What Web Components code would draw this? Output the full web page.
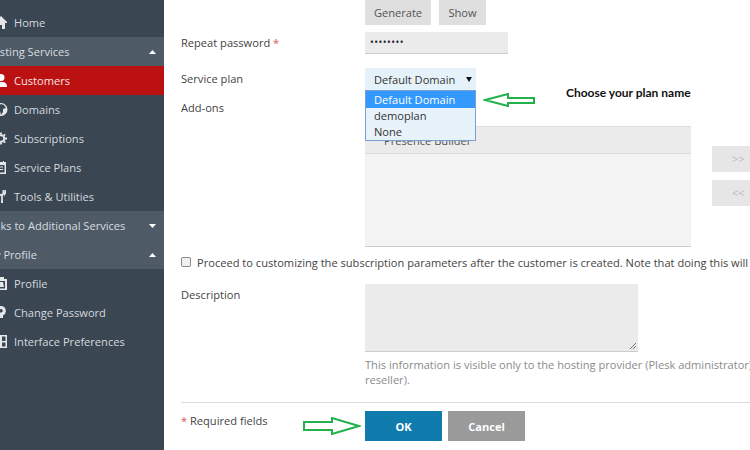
<!DOCTYPE html>
<html>
<head>
<meta charset="utf-8">
<title>Add customer</title>
<style>
  html, body { margin: 0; height: 100%; overflow: hidden; background: #fff; }
  body { font-family: "Open Sans", sans-serif; font-size: 11.1px; }
  app-shell { height: 450px; }
</style>
</head>
<body>
<app-shell>
  <side-nav slot="nav"></side-nav>
  <customer-form slot="main"></customer-form>
</app-shell>

<script>
const ICONS = {
  home: '<path d="M6 0 0 6v1h2v6h8V7h2V6zM5 9h2v4H5z" fill-rule="evenodd"/>',
  user: '<circle cx="6" cy="3.5" r="3.500"/><path d="M0 13c0-4 2-5 6-5s6 1 6 5z"/>',
  globe: '<path fill-rule="evenodd" d="M6 0a6.500 6.500 0 1 0 0 13A6.500 6.500 0 0 0 6 0zM3 3l3-2 3 1 2 3-3 1v3L6 12 5 8 2 6z"/>',
  gear: '<circle cx="6" cy="6.500" r="3.300" fill="none" stroke="#e4e7ea" stroke-width="2"/><path d="M6 .5v2M6 10.500v2M0 6.500h2M10 6.500h2M1.800 2.300l1.400 1.400M8.800 9.300l1.400 1.400M1.800 10.700l1.400-1.400M8.800 3.700l1.400-1.400" stroke="#e4e7ea" stroke-width="1.800" fill="none"/>',
  plans: '<path fill-rule="evenodd" d="M3 0h1v1h4V0h1v1h2v12H1V1h2zM2.500 4v7.500h7V4zM4 5.500h4v1H4zM4 8h4v1H4z"/>',
  tools: '<path d="M2 0h1.500v3l1 1h1l1-1V0H8v3.500L6.800 6.500 7 13H5l.200-6.500L2 3.500zM8.500 0H10v3.500L8 6.500V3z" transform="translate(1 0)"/>',
  profile: '<path fill-rule="evenodd" d="M0 2h3V0h6v2h3v11H0zM2 4v7.500h8V4zM4 5h4l1 5H3z"/>',
  key: '<path fill-rule="evenodd" d="M6 0a5 5 0 0 1 2 9.500V12H4V9.500A5 5 0 0 1 6 0zm0 3a1.800 1.800 0 1 0 0 3.600A1.800 1.800 0 0 0 6 3z"/>',
  prefs: '<path fill-rule="evenodd" d="M0 0h12v13H0zM1.500 1.500v4.500H5V1.500zM7 1.500v4.500h3.500V1.500zM1.500 7.500v4H5v-4zM7 7.500v4h3.500v-4z"/>'
};

class AppShell extends HTMLElement {
  constructor() {
    super();
    this.attachShadow({ mode: "open" });
    this.shadowRoot.innerHTML = `
      <style>
        :host { display: flex; width: 750px; overflow: hidden; }
        .nav { flex: 0 0 164px; display: flex; }
        .main { flex: 1; min-width: 0; }
      </style>
      <div class="nav"><slot name="nav"></slot></div>
      <div class="main"><slot name="main"></slot></div>
    `;
  }
}

class NavItem extends HTMLElement {
  constructor() {
    super();
    this.attachShadow({ mode: "open" });
    const icon = ICONS[this.getAttribute("icon")] || "";
    this.shadowRoot.innerHTML = `
      <style>
        :host {
          display: flex; align-items: center; gap: 7px; height: 29px;
          color: #d5dadf; white-space: nowrap; overflow: hidden;
        }
        :host([active]) { background: #bb1111; color: #f6e4e4; }
        svg { flex: none; width: 12px; height: 13px; margin-left: -5px; fill: #e4e7ea; overflow: visible; }
        :host([active]) svg { fill: #fff; }
      </style>
      <svg viewBox="0 0 12 13">${icon}</svg>
      <span><slot></slot></span>
    `;
  }
}

class NavGroup extends HTMLElement {
  constructor() {
    super();
    this.attachShadow({ mode: "open" });
    const up = this.hasAttribute("open");
    this.shadowRoot.innerHTML = `
      <style>
        :host {
          display: flex; align-items: center; height: 29px;
          background: #4e5b66; color: #d9dde1; white-space: nowrap;
        }
        .label { flex: 1; min-width: 0; overflow: hidden; }
        .label span { display: block; margin-left: -15px; }
        svg { flex: none; width: 7px; height: 4px; margin-right: 8px; fill: #fff; }
      </style>
      <div class="label"><span><slot></slot></span></div>
      <svg viewBox="0 0 7 4"><path d="${up ? "M3.500 0 7 4H0z" : "M0 0h7L3.500 4z"}"/></svg>
    `;
  }
}

class SideNav extends HTMLElement {
  constructor() {
    super();
    this.attachShadow({ mode: "open" });
    this.shadowRoot.innerHTML = `
      <style>
        :host { display: block; width: 164px; height: 450px; background: #3a4652; padding-top: 8px; box-sizing: border-box; overflow: hidden; }
      </style>
      <nav-item icon="home">Home</nav-item>
      <nav-group open>Hosting Services</nav-group>
      <nav-item icon="user" active>Customers</nav-item>
      <nav-item icon="globe">Domains</nav-item>
      <nav-item icon="gear">Subscriptions</nav-item>
      <nav-item icon="plans">Service Plans</nav-item>
      <nav-item icon="tools">Tools &amp; Utilities</nav-item>
      <nav-group>Links to Additional Services</nav-group>
      <nav-group open>My Profile</nav-group>
      <nav-item icon="profile">Profile</nav-item>
      <nav-item icon="key">Change Password</nav-item>
      <nav-item icon="prefs">Interface Preferences</nav-item>
    `;
  }
}

class FormRow extends HTMLElement {
  constructor() {
    super();
    this.attachShadow({ mode: "open" });
    this.shadowRoot.innerHTML = `
      <style>
        :host { display: grid; grid-template-columns: 184px 1fr; color: #444; }
        .label { line-height: 16px; padding-top: var(--label-top, 3px); }
      </style>
      <div class="label"><slot name="label"></slot></div>
      <div class="field"><slot></slot></div>
    `;
  }
}

class PlanSelect extends HTMLElement {
  constructor() {
    super();
    this.attachShadow({ mode: "open" });
    this.shadowRoot.innerHTML = `
      <style>
        :host { display: block; position: relative; width: 111px; height: 22px; }
        .box {
          height: 22px; background: #e6f2f9; color: #333; display: flex;
          align-items: center; padding: 0 4px 0 9px; justify-content: space-between;
        }
        .arrow { width: 0; height: 0; border: 3px solid transparent; border-top: 5px solid #111; border-bottom: 0; }
        .menu {
          position: absolute; left: 0; top: 22px; width: 111px; box-sizing: border-box; height: 51px;
          background: #e8f2fa; border: 1px solid #7a9fd0; color: #333; z-index: 3;
        }
        .menu div { height: 16px; line-height: 16px; padding-left: 8px; }
        .menu .sel { background: #3399ff; color: #fff; height: 17px; line-height: 17px; }
      </style>
      <div class="box"><span>Default Domain</span><i class="arrow"></i></div>
      <div class="menu">
        <div class="sel">Default Domain</div>
        <div>demoplan</div>
        <div>None</div>
      </div>
    `;
  }
}

class AddonPicker extends HTMLElement {
  constructor() {
    super();
    this.attachShadow({ mode: "open" });
    this.shadowRoot.innerHTML = `
      <style>
        :host { display: flex; gap: 21px; align-items: flex-start; white-space: nowrap; width: 500px; }
        .list { flex: 0 0 326px; height: 121px; background: #f3f3f3; border-bottom: 1px solid #ccc; box-sizing: border-box; }
        .head { height: 28px; box-sizing: border-box; background: #ebebeb; border-top: 1px solid #ddd; border-bottom: 1px solid #d5dde2; padding: 6px 0 0 19px; color: #555; line-height: 16px; }
        .moves { display: flex; flex-direction: column; gap: 8px; padding-top: 20px; }
        .moves div { width: 60px; height: 26px; line-height: 26px; background: #e6e6e6; color: #bbb; padding-left: 20px; box-sizing: border-box; }
      </style>
      <div class="list"><div class="head">Presence Builder</div></div>
      <div class="moves"><div>&gt;&gt;</div><div>&lt;&lt;</div></div>
    `;
  }
}

class PlainButton extends HTMLElement {
  constructor() {
    super();
    this.attachShadow({ mode: "open" });
    this.shadowRoot.innerHTML = `
      <style>
        :host {
          display: inline-flex; align-items: center; justify-content: center; box-sizing: border-box;
          height: 26px; background: #dfdfdf; color: #555;
        }
        :host([kind="ok"]) { width: 77px; height: 30px; background: #0f7cad; color: #fff; font-weight: 700; }
        :host([kind="cancel"]) { width: 77px; height: 30px; background: #9a9a9a; color: #fff; font-weight: 700; }
      </style>
      <slot></slot>
    `;
  }
}

class GreenArrow extends HTMLElement {
  constructor() {
    super();
    this.attachShadow({ mode: "open" });
    const left = this.hasAttribute("left");
    this.shadowRoot.innerHTML = `
      <style>
        :host { display: block; position: absolute; z-index: 4; }
        svg { display: block; }
      </style>
      ${left
        ? `<svg width="52" height="14" viewBox="0 0 52 14"><path d="M2 7 25 1v4h26v5H25v3z" fill="#fff" stroke="#22b14c" stroke-width="2"/></svg>`
        : `<svg width="58" height="18" viewBox="0 0 58 18"><path d="M1 5h28V1l27 8-27 8v-4H1z" fill="#fff" stroke="#22b14c" stroke-width="2"/></svg>`}
    `;
  }
}

class CustomerForm extends HTMLElement {
  constructor() {
    super();
    this.attachShadow({ mode: "open" });
    this.shadowRoot.innerHTML = `
      <style>
        :host { display: block; position: relative; height: 450px; width: 586px; overflow: hidden; box-sizing: border-box; padding-left: 17px; color: #444; }
        .buttons { display: flex; gap: 8px; height: 25px; align-items: flex-end; }
        .buttons plain-button:first-child { width: 66px; }
        .buttons plain-button:last-child { width: 47px; }
        .input { width: 143px; height: 22px; box-sizing: border-box; background: #ebebeb; border-bottom: 1px solid #ccc; color: #222; padding-left: 5px; line-height: 20px; letter-spacing: .5px; font-size: 10px; }
        .star { color: #d9534f; }
        .check { display: flex; align-items: center; gap: 6px; margin-top: 7px; height: 16px; white-space: nowrap; color: #444; }
        .check i { flex: none; width: 8px; height: 8px; border: 1px solid #8a8a8a; border-radius: 2px; background: #f0f0f0; }
        .area { position: relative; width: 273px; height: 68px; background: #ebebeb; border-bottom: 1px solid #ccc; box-sizing: border-box; }
        .area svg { position: absolute; right: 1px; bottom: 1px; }
        .hint { width: 400px; margin-top: 5px; line-height: 15px; color: #8b8b8b; white-space: nowrap; }
        .rule { height: 1px; background: #ddd; margin-top: 15px; }
        .foot { display: grid; grid-template-columns: 184px 1fr; margin-top: 8px; }
        .foot .req { padding-top: 2px; line-height: 16px; }
        .foot .acts { display: flex; gap: 6px; }
        .note { position: absolute; left: 402px; top: 85px; font: 700 12px Lato, sans-serif; color: #111; white-space: nowrap; }
        form-row + form-row { margin-top: 14px; }
      </style>
      <div class="buttons" style="margin-left:184px">
        <plain-button>Generate</plain-button>
        <plain-button>Show</plain-button>
      </div>
      <form-row style="margin-top:7px">
        <span slot="label">Repeat password <span class="star">*</span></span>
        <div class="input">&#8226;&#8226;&#8226;&#8226;&#8226;&#8226;&#8226;&#8226;</div>
      </form-row>
      <form-row>
        <span slot="label">Service plan</span>
        <plan-select></plan-select>
      </form-row>
      <form-row style="margin-top:10px;--label-top:0px">
        <span slot="label">Add-ons</span>
        <addon-picker style="margin-top:26px"></addon-picker>
      </form-row>
      <div class="check"><i></i><span>Proceed to customizing the subscription parameters after the customer is created. Note that doing this will</span></div>
      <form-row style="margin-top:14px">
        <span slot="label">Description</span>
        <div>
          <div class="area"><svg width="8" height="8" viewBox="0 0 8 8"><path d="M1 7 7 1M4 7l3-3" stroke="#777" fill="none"/></svg></div>
          <div class="hint">This information is visible only to the hosting provider (Plesk administrator)<br>reseller).</div>
        </div>
      </form-row>
      <div class="rule"></div>
      <div class="foot">
        <div class="req"><span class="star">*</span> Required fields</div>
        <div class="acts">
          <plain-button kind="ok">OK</plain-button>
          <plain-button kind="cancel">Cancel</plain-button>
        </div>
      </div>
      <div class="note">Choose your plan name</div>
      <green-arrow left style="left:319px;top:93px"></green-arrow>
      <green-arrow style="left:139px;top:417px"></green-arrow>
    `;
  }
}

customElements.define("app-shell", AppShell);
customElements.define("nav-item", NavItem);
customElements.define("nav-group", NavGroup);
customElements.define("side-nav", SideNav);
customElements.define("form-row", FormRow);
customElements.define("plan-select", PlanSelect);
customElements.define("addon-picker", AddonPicker);
customElements.define("plain-button", PlainButton);
customElements.define("green-arrow", GreenArrow);
customElements.define("customer-form", CustomerForm);
</script>
</body>
</html>
